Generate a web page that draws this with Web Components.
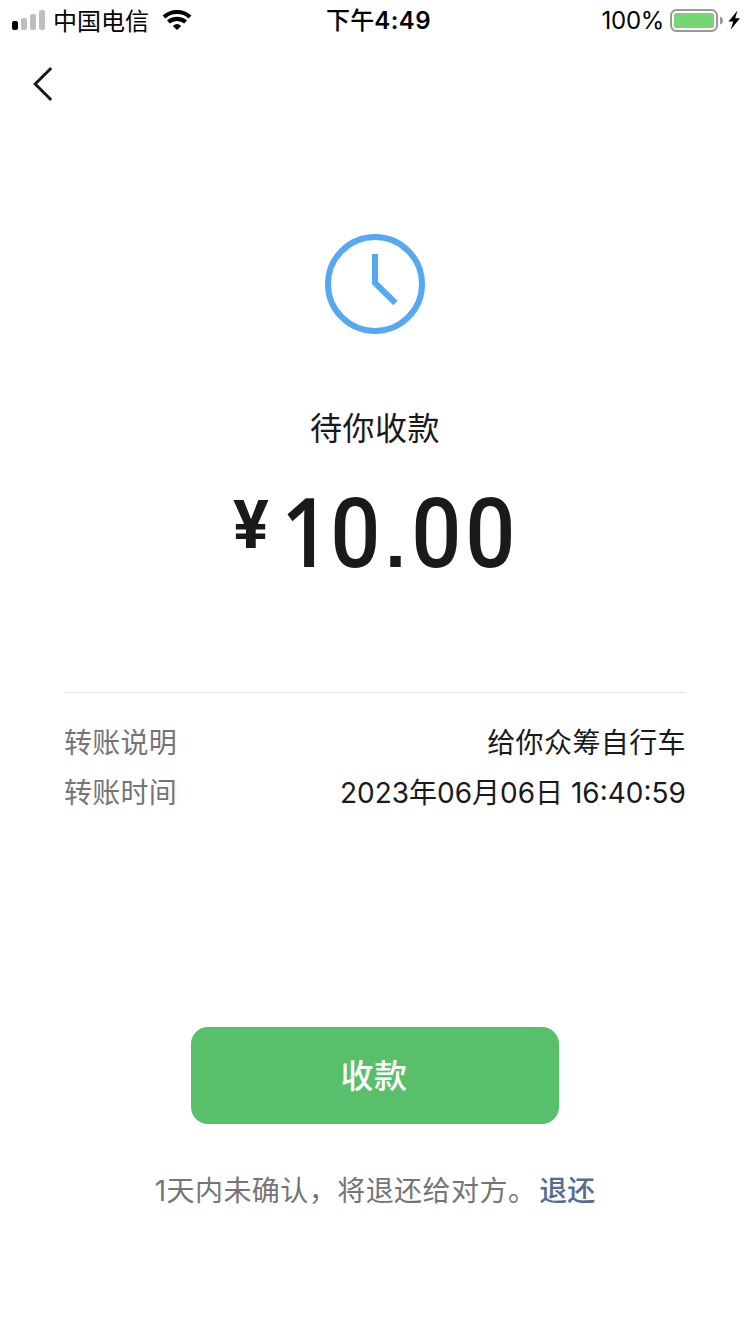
<!DOCTYPE html>
<html lang="zh-CN">
<head>
<meta charset="utf-8">
<title>待你收款</title>
<style>
html,body{margin:0;padding:0;background:#fff}
body{width:750px;height:1334px;overflow:hidden;font-family:Inter,"Noto Sans CJK SC",sans-serif;color:#1a1a1a}
</style>
</head>
<body>
<transfer-page></transfer-page>
<script>
const define = (name, html) => customElements.define(name, class extends HTMLElement {
  constructor() {
    super();
    this.attachShadow({ mode: 'open' }).innerHTML = html;
  }
});

define('status-bar', `
<style>
:host{display:grid;grid-template-columns:1fr auto 1fr;height:40px;color:#000;font-size:24px;line-height:40px;white-space:nowrap}
svg{display:block;flex:none}
.left,.right{display:flex;align-items:flex-start}
.left{padding-left:12px}
.carrier,.time,.pct{padding-top:1px;height:39px}
.carrier{margin-left:8px;padding-top:2px;height:38px}
.wifi{margin-left:13px}
.time{font-weight:500;padding-left:7px;letter-spacing:.1px}
.time b{font-weight:600;letter-spacing:.4px}
.right{justify-content:flex-end;padding-right:9px}
.pct{margin-right:6px;letter-spacing:-.3px}
</style>
<div class="left">
  <svg width="33" height="40" viewBox="0 0 33 40"><rect y="21" width="6" height="9" rx="2"/><g fill="#bfbfbf"><rect x="9" y="18" width="6" height="12" rx="2"/><rect x="18" y="14" width="6" height="16" rx="2"/><rect x="27" y="10" width="6" height="20" rx="2"/></g></svg>
  <span class="carrier">中国电信</span>
  <svg class="wifi" width="30" height="40" viewBox="0 0 30 40"><g fill="none" stroke="#000" stroke-width="4.2"><path d="M2 17C9 10.3 21 10.3 28 17"/><path d="M6.4 22C11.2 17.8 18.8 17.8 23.6 22"/></g><path d="M10.8 26Q15 22 19.2 26L15 30Z"/></svg>
</div>
<div class="time">下午<b>4:49</b></div>
<div class="right">
  <span class="pct">100%</span>
  <svg width="71" height="40" viewBox="0 0 71 40"><rect x="1" y="10" width="46" height="21" rx="5.5" fill="#fff" stroke="#999" stroke-width="2"/><rect x="4" y="13" width="40" height="15" rx="2" fill="#76d672"/><path d="M50 16.5Q53 17.5 53 20.5T50 24.5Z" fill="#999"/><path d="M67.5 10.5L58.5 21.5H63.2L60.8 29.5L70 18.3H65.2Z"/></svg>
</div>`);

define('nav-bar', `
<style>:host{display:flex;height:88px;align-items:center;padding-left:32px}svg{display:block}</style>
<svg width="22" height="36" viewBox="0 0 22 36"><path d="M19.2 2L3.2 18L19.2 34" fill="none" stroke="#1a1a1a" stroke-width="3"/></svg>`);

define('transfer-status', `
<style>
:host{display:flex;flex-direction:column;align-items:center}
svg{display:block}
.title{margin-top:71px;font-size:32px;line-height:48px;letter-spacing:.5px}
</style>
<svg width="100" height="100" viewBox="0 0 100 100" fill="none" stroke="#54a9f2" stroke-width="6"><circle cx="50" cy="50" r="47"/><path d="M50 20V49L70.5 69"/></svg>
<div class="title"><slot></slot></div>`);

// Each figure sits in a fixed-width cell so that the amount stays tabular.
customElements.define('money-amount', class extends HTMLElement {
  constructor() {
    super();
    this.attachShadow({ mode: 'open' }).innerHTML = `
<style>
:host{display:flex;justify-content:center;align-items:flex-start;height:112px;line-height:112px;font-family:Roboto,sans-serif;font-size:96px;font-weight:500}
.sign{font-size:67px;line-height:78px;font-weight:700;margin:9px 5px 0 0}
.num{display:flex;align-items:baseline;margin-top:-3px}
.num span{display:block;width:54px;text-align:center;height:112px}
.num .zero{transform:scaleX(.92)}
.num .one{transform:translateX(4.4px) scaleX(.9);font-family:"Open Sans",sans-serif;font-weight:600}
.num .dot{width:27px;font-family:"Liberation Sans",sans-serif;font-weight:700;font-size:74px}
</style>
<span class="sign">¥</span><div class="num"></div>`;
  }
  connectedCallback() {
    const kind = { '0': 'zero', '1': 'one', '.': 'dot' };
    this.shadowRoot.querySelector('.num').innerHTML =
      [...this.getAttribute('value')].map(c => `<span class="${kind[c] || ''}">${c}</span>`).join('');
  }
});

define('detail-row', `
<style>
:host{display:flex;justify-content:space-between;height:50px;line-height:50px;font-size:28px;white-space:nowrap}
.label{color:#757575;letter-spacing:.25px}
.value{letter-spacing:var(--track,.4px)}
</style>
<span class="label"><slot name="label"></slot></span><span class="value"><slot></slot></span>`);

define('detail-list', `
<style>:host{display:block;margin:0 64px;border-top:1px solid #e2e2e2;padding-top:25px}</style>
<slot></slot>`);

define('primary-button', `
<style>
:host{display:block;width:368px;height:97px;margin:0 auto}
button{display:block;width:100%;height:100%;border:0;border-radius:17px;background:#58bf6b;color:#fff;font:500 33px/97px Inter,"Noto Sans CJK SC",sans-serif;padding:1px 2px 0 0;letter-spacing:.6px}
</style>
<button><slot></slot></button>`);

define('refund-note', `
<style>
:host{display:flex;justify-content:center;font-size:28px;line-height:44px;color:#757575;letter-spacing:.45px;white-space:nowrap}
a{color:#576b95;font-weight:500;margin-left:3px;letter-spacing:0}
</style>
<span><slot></slot></span><a><slot name="action"></slot></a>`);

define('transfer-page', `
<style>
:host{display:flex;flex-direction:column;height:1334px}
transfer-status{margin-top:106px}
money-amount{margin-top:24px}
detail-list{margin-top:103px}
primary-button{margin-top:209px}
refund-note{margin-top:45px}
</style>
<status-bar></status-bar>
<nav-bar></nav-bar>
<transfer-status>待你收款</transfer-status>
<money-amount value="10.00"></money-amount>
<detail-list>
  <detail-row><span slot="label">转账说明</span>给你众筹自行车</detail-row>
  <detail-row style="--track:0px"><span slot="label">转账时间</span>2023年06月06日 16:40:59</detail-row>
</detail-list>
<primary-button>收款</primary-button>
<refund-note>1天内未确认，将退还给对方。<span slot="action">退还</span></refund-note>`);
</script>
</body>
</html>
